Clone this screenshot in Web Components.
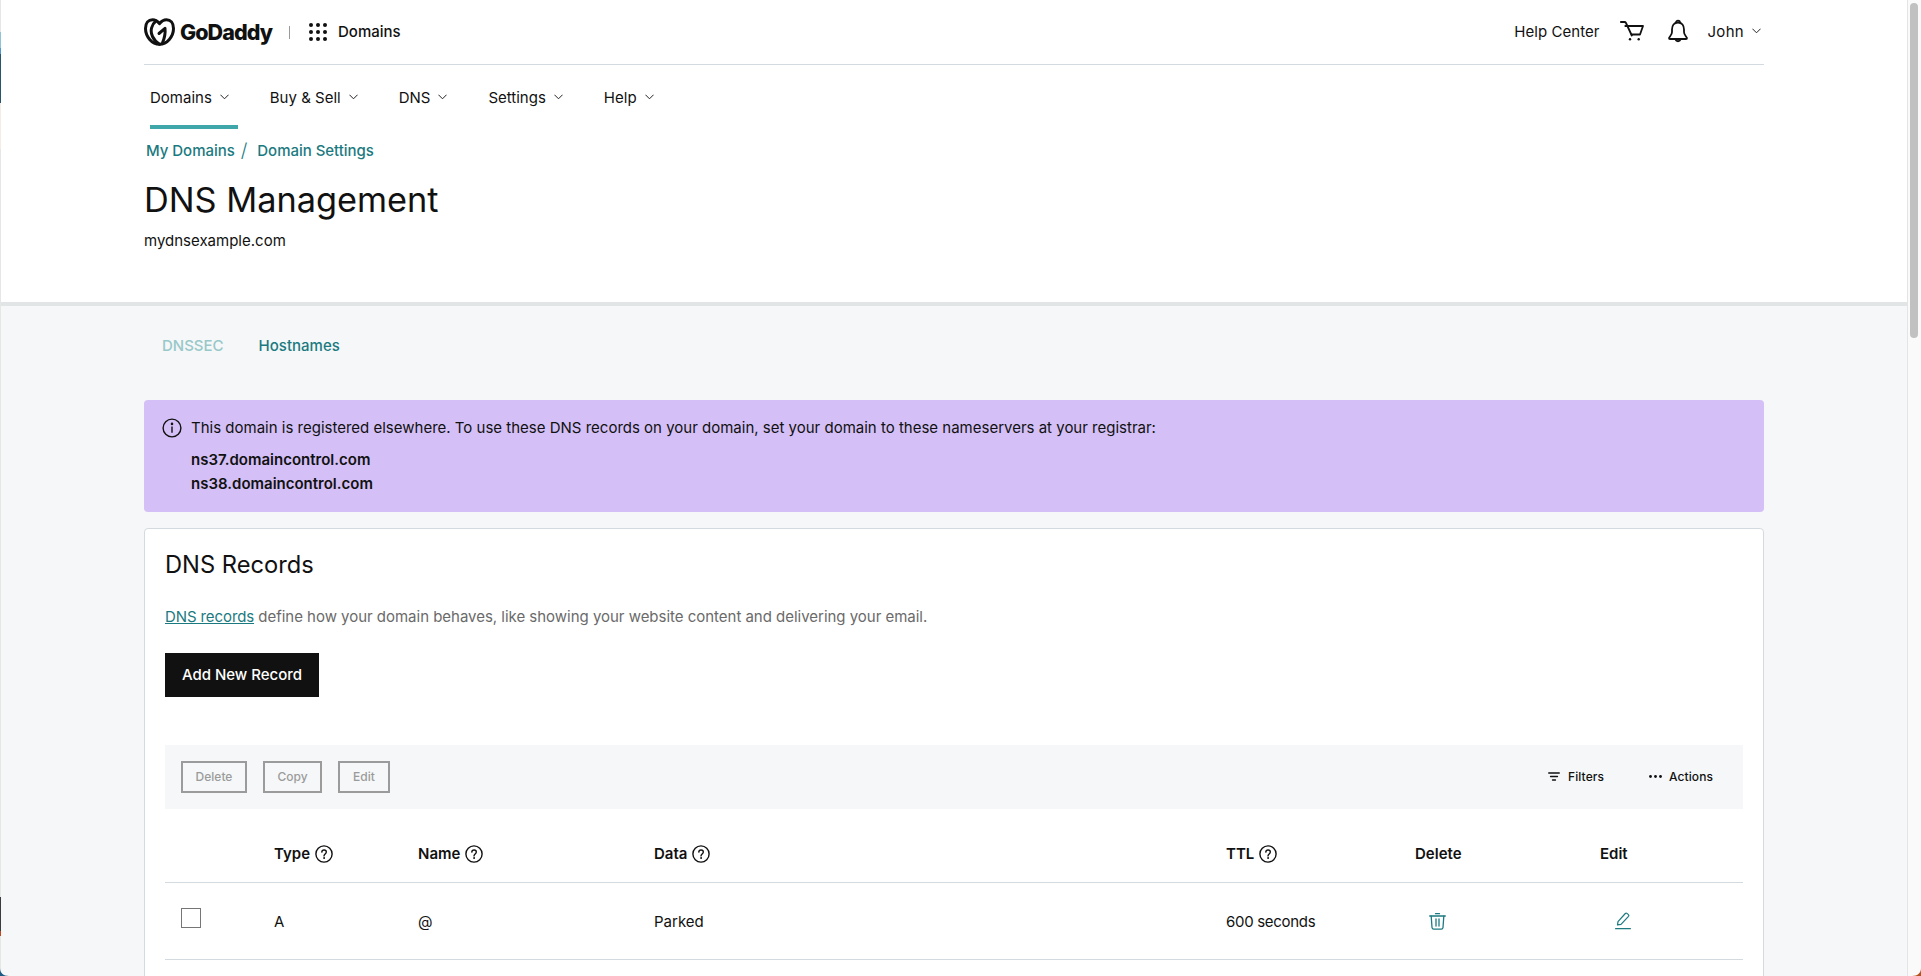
<!doctype html>
<html lang="en"><head><meta charset="utf-8"><title>DNS Management</title>
<style>
html,body{margin:0;padding:0;height:976px;overflow:hidden;background:#fff}
body{font-family:Inter,"Noto Sans",sans-serif;font-size:15px;color:#111;-webkit-font-smoothing:antialiased}
</style></head><body>
<gd-app>
  <gd-header>
    <gd-nav-item active>Domains</gd-nav-item>
    <gd-nav-item>Buy &amp; Sell</gd-nav-item>
    <gd-nav-item>DNS</gd-nav-item>
    <gd-nav-item>Settings</gd-nav-item>
    <gd-nav-item>Help</gd-nav-item>
  </gd-header>
  <gd-content>
    <gd-alert>
      <span slot="message">This domain is registered elsewhere. To use these DNS records on your domain, set your domain to these nameservers at your registrar:</span>
      <div>ns37.domaincontrol.com</div>
      <div>ns38.domaincontrol.com</div>
    </gd-alert>
    <gd-card>
      <gd-toolbar></gd-toolbar>
      <dns-table></dns-table>
    </gd-card>
  </gd-content>
</gd-app>
<script>
const chevron=`<svg width="9" height="6" viewBox="0 0 9 6" fill="none" stroke="#222" stroke-width="1" stroke-linecap="round" stroke-linejoin="round"><path d="M.7 1 4.500 4.800 8.300 1"/></svg>`;
const helpIcon=`<svg width="18" height="18" viewBox="0 0 18 18" fill="none" stroke="#111" stroke-width="1.400" stroke-linecap="round"><circle cx="9" cy="9" r="8.100"/><path d="M6.800 7.100C6.900 5.800 7.900 5 9.100 5c1.300 0 2.200.9 2.200 2 0 1.900-2.300 2-2.300 3.900"/><circle cx="9" cy="13" r=".5" fill="#111" stroke-width=".9"/></svg>`;
function el(name,html){customElements.define(name,class extends HTMLElement{constructor(){super();this.attachShadow({mode:'open'}).innerHTML=html;}});}

el('gd-app',`<style>
:host{display:flex;height:976px;overflow:hidden;position:relative}
.main{flex:1;min-width:0;height:976px;overflow:hidden;border-left:1px solid #e6e6e6;box-sizing:border-box}
.track{width:14px;flex:none;box-sizing:border-box;background:#fafafa;border-left:1px solid #e4e4e4;padding:3px 3px 0 2px}
.thumb{height:335px;background:#c1c1c1;border-radius:4px}
.edge{position:absolute;left:0;width:1px}
.corner{position:absolute;bottom:0;width:9px;height:8px}
</style>
<div class="main"><slot></slot></div>
<div class="track"><div class="thumb"></div></div>
<i class="edge" style="top:32px;height:16px;background:#8fc4d8"></i>
<i class="edge" style="top:48px;height:6px;background:#4f97cf"></i>
<i class="edge" style="top:54px;height:49px;background:#28556b"></i>
<i class="edge" style="top:103px;height:46px;background:#f7ece4"></i>
<i class="edge" style="top:897px;height:34px;background:#3c3c3e"></i>
<i class="edge" style="top:931px;height:5px;background:#c2481c"></i>
<svg class="corner" style="left:0" viewBox="0 0 9 8"><path d="M0 0C0 4.500 3 8 9 8H0Z" fill="#1d5a84"/></svg>
<svg class="corner" style="right:0" viewBox="0 0 9 8"><path d="M9 0C9 4.500 6 8 0 8H9Z" fill="#b5511d"/></svg>`);

el('gd-logo',`<style>
:host{display:flex;align-items:center;height:64px}
svg{display:block}
.word{font:800 21.500px/1 Inter,sans-serif;letter-spacing:-.95px;color:#111;margin-left:5px;position:relative;top:1px}
.sep{width:1px;height:13px;background:#9a9a9a;margin:0 19px 0 17px}
.grid{display:grid;grid-template-columns:repeat(3,4px);gap:3px;margin-right:11px}
.grid i{width:4px;height:4px;border-radius:50%;background:#111}
.prod{font-weight:500;font-size:15px;color:#111;position:relative;top:-1px}
</style>
<svg width="31" height="28" viewBox="0 0 31 28" fill="none" stroke="#111" stroke-width="3" stroke-linecap="round" stroke-linejoin="round">
<path d="M15.500 26.300C8 26.300 1.500 18.500 1.500 10.500 1.500 5 4.500 1.700 8.500 1.700c2.700 0 5.200 1.500 7 4 1.800-2.500 4.300-4 7-4 4 0 7 3.300 7 8.800 0 8-6.500 15.800-14 15.800Z"/>
<path d="M12 2.800C7.500 6.500 5.800 13 8.500 18.500c1.500 3 3.800 6 7 7.800"/>
<path d="M15 15.500 21 10.300c.5 4.500-.5 9.700-2.500 14.500"/>
</svg>
<span class="word">GoDaddy</span><i class="sep"></i>
<div class="grid"><i></i><i></i><i></i><i></i><i></i><i></i><i></i><i></i><i></i></div>
<span class="prod">Domains</span>`);

el('gd-header',`<style>
:host{display:block;background:#fff;height:306px;box-sizing:border-box;border-bottom:4px solid #e2e5e6;padding:0 143px}
.top{display:flex;align-items:center;justify-content:space-between;height:64px;border-bottom:1px solid #d4dbe0}
.right{display:flex;align-items:center;margin-bottom:2px}
.help{margin-right:20px;letter-spacing:.05px}
.cart{margin-right:24px;display:block}
.bell{margin-right:20px;display:block}
.user{display:flex;align-items:center;gap:8px;letter-spacing:.3px}
.user svg{margin-right:3px}
nav{display:flex;gap:32px;margin-left:6px}
.crumbs{display:flex;margin:12px 0 0 2px;font-weight:500;line-height:20px;color:#1b7a80;letter-spacing:-.03px}
.crumbs s{text-decoration:none;color:#1b7a80;font-weight:300;font-size:19px;margin:0 10px 0 6px}
h1{margin:17px 0 0;font:400 34.300px/44px Inter,sans-serif;color:#111}
p{margin:9px 0 0;line-height:20px}
</style>
<div class="top"><gd-logo></gd-logo>
<div class="right"><span class="help">Help Center</span>
<svg class="cart" width="24" height="20" viewBox="0 0 24 20" fill="none" stroke="#111" stroke-width="1.800" stroke-linecap="round" stroke-linejoin="round"><path d="M.8 1H4.500c.7 0 1.200.4 1.500 1l5.800 12.500"/><path d="M5.300 5H23l-3 8.500H11.500"/><circle cx="10" cy="18.200" r="1.200" fill="#111" stroke="none"/><circle cx="18.700" cy="18.200" r="1.200" fill="#111" stroke="none"/></svg>
<svg class="bell" width="20" height="24" viewBox="0 0 20 24" fill="none" stroke="#111" stroke-width="1.800" stroke-linejoin="round"><path d="M10 3.500C6 3.500 4 6.500 4 10.500V13c0 3-2.300 4.200-3 6 0 .7.300 1 1 1h16c.7 0 1-.3 1-1-.7-1.800-3-3-3-6v-2.500c0-4-2-7-6-7Z"/><path d="M8 3.700C8 1 12 1 12 3.700"/><path d="M7.500 20c.4 3 4.600 3 5 0"/></svg>
<span class="user">John ${chevron}</span></div></div>
<nav><slot></slot></nav>
<div class="crumbs"><span>My Domains</span><s>/</s><span>Domain Settings</span></div>
<h1>DNS Management</h1>
<p>mydnsexample.com</p>`);

el('gd-nav-item',`<style>
:host{display:flex;align-items:center;gap:8px;box-sizing:border-box;height:64px;padding-top:4px;border-bottom:4px solid transparent;padding-right:9px;color:#111}
:host([active]){border-bottom-color:#3fa7a9}
</style><slot></slot>${chevron}`);

el('gd-content',`<style>
:host{display:block;background:#f5f7f8;padding:30px 143px 0;height:670px;box-sizing:border-box;overflow:hidden}
.tabs{display:flex;gap:35px;padding-left:18px;line-height:20px;font-weight:500;margin-bottom:44px}
.off{color:#98c8c9}.on{color:#1b7a80;font-weight:550}
</style>
<div class="tabs"><span class="off">DNSSEC</span><span class="on">Hostnames</span></div>
<slot></slot>`);

el('gd-alert',`<style>
:host{display:flex;background:#d4c0f6;border-radius:4px;height:112px;box-sizing:border-box;padding:18px 18px 16px;color:#111}
svg{display:block;flex:none;margin-right:9px}
.msg{line-height:20px;margin-bottom:10px}
.ns{font-weight:600;line-height:24px}
</style>
<svg width="20" height="20" viewBox="0 0 20 20" fill="none" stroke="#111" stroke-width="1.400" stroke-linecap="round"><circle cx="10" cy="10" r="8.900"/><path d="M10 9v5.200"/><circle cx="10" cy="5.900" r=".6" fill="#111"/></svg>
<div><div class="msg"><slot name="message"></slot></div><div class="ns"><slot></slot></div></div>`);

el('gd-card',`<style>
:host{display:block;margin-top:16px;background:#fff;border:1px solid #d4dbe0;border-radius:4px;padding:20px 20px 40px;box-sizing:border-box}
h2{margin:0;font:400 23.700px/32px Inter,sans-serif;color:#111}
p{margin:26px 0 0;line-height:20px;color:#6a6a6a;letter-spacing:-.02px}
a{color:#1b7a80;text-decoration:underline;letter-spacing:-.1px}
button{display:block;margin:26px 0 48px;width:154px;height:44px;border:0;border-radius:0;background:#111;color:#fff;font:500 15px Inter,sans-serif;padding:0 0 2px}
</style>
<h2>DNS Records</h2>
<p><a>DNS records</a> define how your domain behaves, like showing your website content and delivering your email.</p>
<button>Add New Record</button>
<slot></slot>`);

el('gd-toolbar',`<style>
:host{display:flex;align-items:center;height:64px;background:#f5f7f8;padding:0 30px 0 16px;font-size:12px;font-weight:500}
.b{box-sizing:border-box;height:32px;border:2px solid #9b9b9b;color:#9b9b9b;display:flex;align-items:center;justify-content:center;margin-right:16px;padding-bottom:2px}
.sp{flex:1}
.t{display:flex;align-items:center;color:#111;position:relative;top:-1px;letter-spacing:.08px}
svg{display:block}
</style>
<span class="b" style="width:66px">Delete</span><span class="b" style="width:59px">Copy</span><span class="b" style="width:52px">Edit</span>
<span class="sp"></span>
<span class="t" style="margin-right:45px"><svg width="12" height="9" viewBox="0 0 12 9" fill="none" stroke="#111" stroke-width="1.300" stroke-linecap="round" style="margin-right:8px"><path d="M.7 1h10.600M2.500 4.500h7M4.500 8h3"/></svg>Filters</span>
<span class="t"><svg width="13" height="3" viewBox="0 0 13 3" fill="#111" style="margin-right:7px"><circle cx="1.500" cy="1.500" r="1.400"/><circle cx="6.500" cy="1.500" r="1.400"/><circle cx="11.500" cy="1.500" r="1.400"/></svg>Actions</span>`);

el('dns-table',`<style>
:host{display:block;color:#111}
.r{display:grid;grid-template-columns:109px 144px 236px 572px 189px 185px 143px;align-items:center;border-bottom:1px solid #d4dbe0;box-sizing:border-box}
.h{height:74px;padding-top:16px;font-weight:600}
.d{height:77px}
.c{display:flex;align-items:center;gap:5px}
.box{display:block;box-sizing:border-box;width:20px;height:20px;margin:-6px 0 0 16px;border:1px solid #767676;background:#fff}
svg{display:block}
.tr{padding-left:14px}
.ic{padding-left:15px}
.n{letter-spacing:-.3px}
</style>
<div class="r h"><span></span><span class="c">Type ${helpIcon}</span><span class="c">Name ${helpIcon}</span><span class="c">Data ${helpIcon}</span><span class="c">TTL ${helpIcon}</span><span>Delete</span><span>Edit</span></div>
<div class="r d"><span><i class="box"></i></span><span>A</span><span>@</span><span>Parked</span><span class="n">600 seconds</span>
<span class="tr"><svg width="17" height="17" viewBox="0 0 17 17" fill="none" stroke="#1b7a80" stroke-width="1.300" stroke-linecap="round" stroke-linejoin="round"><path d="M6.500.7h4M.7 3h15.600"/><path d="M2.200 3.200l.8 11.300c.1 1 .8 1.700 1.800 1.700h7.400c1 0 1.700-.7 1.800-1.700l.8-11.300"/><path d="M7 6v7M10 6v7"/></svg></span>
<span class="ic"><svg width="16" height="18" viewBox="0 0 16 18" fill="none" stroke="#1b7a80" stroke-width="1.200" stroke-linecap="round" stroke-linejoin="round"><path d="M2.500 12.800 3 9.600 10.300 1.500c.5-.5 1.200-.5 1.700-.1l1.400 1.200c.5.500.5 1.200.1 1.700L6 12.300l-3.500.5Z"/><path d="M.6 16.700h14.800"/></svg></span></div>`);
</script>
</body></html>
